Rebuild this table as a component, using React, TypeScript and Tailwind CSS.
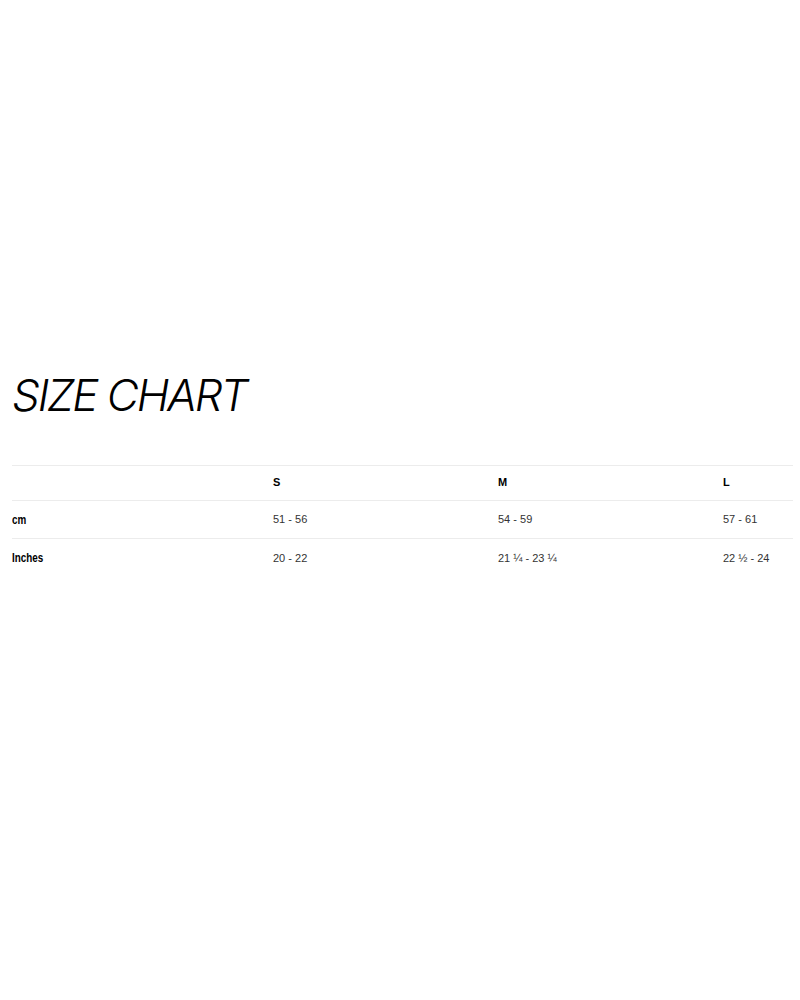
const rows = [
  { label: "cm", values: ["51 - 56", "54 - 59", "57 - 61"] },
  { label: "Inches", values: ["20 - 22", "21 ¼ - 23 ¼", "22 ½ - 24"] },
];

const sizes = ["S", "M", "L"];

export default function App() {
  return (
    <div className="w-[800px] h-[1000px] bg-white font-['Liberation_Sans',Arial,sans-serif]">
      <div className="pl-[12px] pr-[7px] pt-[371px]">
        <h1 className="font-['Inter',sans-serif] font-light italic text-[44px] leading-[48px] tracking-[-2.1px] text-black">
          SIZE CHART
        </h1>
        <div className="mt-[46px] border-t border-[#ececec]">
          <div className="grid grid-cols-[261px_225px_225px_1fr] h-[35px] items-center border-b border-[#ececec] text-[11px] font-bold text-black pb-[1px]">
            <div />
            {sizes.map((s) => (
              <div key={s}>{s}</div>
            ))}
          </div>
          {rows.map((r, i) => (
            <div
              key={r.label}
              className={`grid grid-cols-[261px_225px_225px_1fr] h-[38px] items-center text-[11px] text-[#333] ${
                i === 0 ? "border-b border-[#ececec]" : ""
              }`}
            >
              <div className="font-bold text-[12px] text-black">
                <span className="inline-block origin-left scale-x-[0.82]">{r.label}</span>
              </div>
              {r.values.map((v) => (
                <div key={v}>{v}</div>
              ))}
            </div>
          ))}
        </div>
      </div>
    </div>
  );
}
